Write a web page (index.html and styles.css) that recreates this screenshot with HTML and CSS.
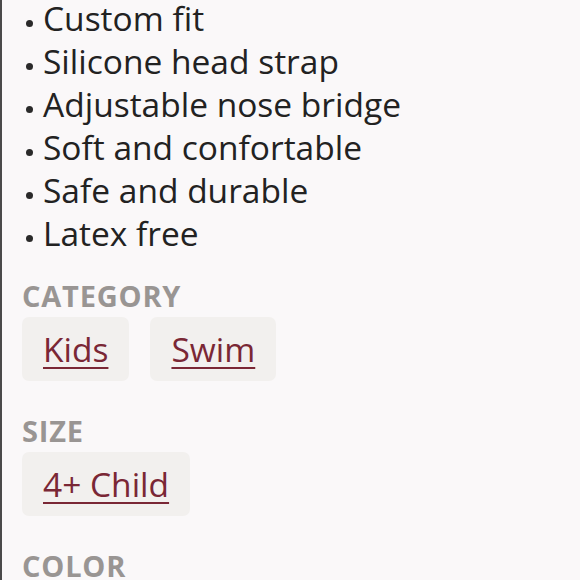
FILE: index.html
```html
<!DOCTYPE html>
<html>
<head>
<meta charset="utf-8">
<link rel="stylesheet" href="styles.css">
</head>
<body>
<div class="page">
  <ul class="features">
    <li>Custom fit</li>
    <li>Silicone head strap</li>
    <li>Adjustable nose bridge</li>
    <li>Soft and confortable</li>
    <li>Safe and durable</li>
    <li>Latex free</li>
  </ul>
  <section class="group">
    <h2 class="label">CATEGORY</h2>
    <div class="chips">
      <a class="chip" href="#">Kids</a>
      <a class="chip" href="#">Swim</a>
    </div>
  </section>
  <section class="group">
    <h2 class="label">SIZE</h2>
    <div class="chips">
      <a class="chip" href="#">4+ Child</a>
    </div>
  </section>
  <section class="group">
    <h2 class="label">COLOR</h2>
  </section>
</div>
</body>
</html>
```
FILE: styles.css
```css
html, body {
  margin: 0;
  padding: 0;
}
body {
  background: #faf8f9;
  font-family: "Open Sans", "Noto Sans", sans-serif;
  color: #222;
  height: 580px;
  overflow: hidden;
}
.page {
  border-left: 2px solid #4a4a4a;
  min-height: 580px;
  padding-left: 20px;
  box-sizing: border-box;
}
.features {
  list-style: none;
  margin: 0;
  padding: 0;
  margin-top: -3px;
}
.features li {
  font-size: 33.5px;
  line-height: 43px;
  padding-left: 21px;
  position: relative;
}
.features li::before {
  content: "";
  position: absolute;
  left: 4px;
  top: 23px;
  width: 7px;
  height: 7px;
  border-radius: 50%;
  background: #2a2a2a;
}
.group {
  margin-top: 24px;
}
.label {
  margin: 0;
  font-size: 29px;
  line-height: 34px;
  font-weight: 700;
  color: #999593;
  letter-spacing: 0.8px;
}
.chips {
  display: flex;
  gap: 21px;
  margin-top: 4px;
  margin-bottom: 33px;
}
.chip {
  display: block;
  background: #f2f0ee;
  border-radius: 7px;
  padding: 0 21px;
  height: 64px;
  line-height: 64px;
  font-size: 33.5px;
  color: #7a2735;
  text-decoration: underline;
  text-decoration-thickness: 2px;
  text-underline-offset: 5px;
}
```
